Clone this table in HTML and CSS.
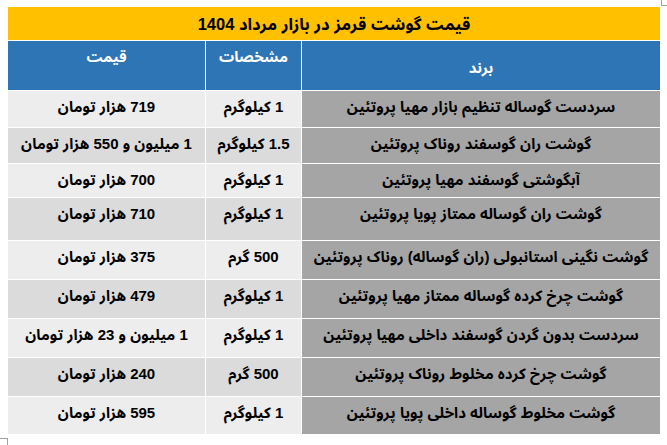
FILE: index.html
```html
<!DOCTYPE html>
<html lang="fa">
<head>
<meta charset="utf-8">
<link rel="stylesheet" href="styles.css">
</head>
<body>
<div class="page">
  <span class="mark mark-tr"></span>
  <div class="table" dir="rtl">
    <div class="title">قیمت گوشت قرمز در بازار مرداد 1404</div>

    <div class="hd hd-brand">برند</div>
    <div class="hd">مشخصات</div>
    <div class="hd">قیمت</div>

    <div class="c brand">سردست گوساله تنظیم بازار مهیا پروتئین</div>
    <div class="c odd">1 کیلوگرم</div>
    <div class="c odd">719 هزار تومان</div>

    <div class="c brand">گوشت ران گوسفند روناک پروتئین</div>
    <div class="c even">1.5 کیلوگرم</div>
    <div class="c even">1 میلیون و 550 هزار تومان</div>

    <div class="c brand">آبگوشتی گوسفند مهیا پروتئین</div>
    <div class="c odd">1 کیلوگرم</div>
    <div class="c odd">700 هزار تومان</div>

    <div class="c brand">گوشت ران گوساله ممتاز پویا پروتئین</div>
    <div class="c even">1 کیلوگرم</div>
    <div class="c even">710 هزار تومان</div>

    <div class="c brand">گوشت نگینی استانبولی (ران گوساله) روناک پروتئین</div>
    <div class="c odd">500 گرم</div>
    <div class="c odd">375 هزار تومان</div>

    <div class="c brand">گوشت چرخ کرده گوساله ممتاز مهیا پروتئین</div>
    <div class="c even">1 کیلوگرم</div>
    <div class="c even">479 هزار تومان</div>

    <div class="c brand">سردست بدون گردن گوسفند داخلی مهیا پروتئین</div>
    <div class="c odd">1 کیلوگرم</div>
    <div class="c odd">1 میلیون و 23 هزار تومان</div>

    <div class="c brand">گوشت چرخ کرده مخلوط روناک پروتئین</div>
    <div class="c even">500 گرم</div>
    <div class="c even">240 هزار تومان</div>

    <div class="c brand">گوشت مخلوط گوساله داخلی پویا پروتئین</div>
    <div class="c odd">1 کیلوگرم</div>
    <div class="c odd">595 هزار تومان</div>
  </div>
  <span class="mark mark-bl"></span>
</div>
</body>
</html>
```
FILE: styles.css
```css
html, body {
  margin: 0;
  padding: 0;
  background: #ffffff;
}
body {
  width: 667px;
  height: 445px;
  overflow: hidden;
  font-family: "Liberation Sans", "Noto Sans Arabic", "Noto Naskh Arabic", "DejaVu Sans Condensed", "DejaVu Sans", sans-serif;
}
.page {
  position: relative;
  width: 667px;
  height: 445px;
  padding: 7px 0 0 8px;
  box-sizing: border-box;
}
.table {
  width: 652px;
  display: grid;
  grid-template-columns: 358px 95px 197px;
  grid-template-rows: 33px 49px 36px 35px 33px 42px 38px 38px 38px 38px 37px;
  gap: 1px;
  background: #ffffff;
}
.title {
  grid-column: 1 / -1;
  background: #ffc000;
  color: #000;
  font-weight: bold;
  font-size: 16.5px;
  line-height: 22px;
  display: flex;
  align-items: center;
  justify-content: center;
}
.hd {
  background: #2e75b6;
  color: #fff;
  font-weight: bold;
  font-size: 15px;
  line-height: 22px;
  text-align: center;
  padding-top: 5px;
  box-sizing: border-box;
}
.hd-brand {
  padding-top: 16px;
}
.c {
  font-weight: bold;
  font-size: 15px;
  line-height: 22px;
  color: #000;
  text-align: center;
  padding-top: 5px;
  box-sizing: border-box;
  white-space: nowrap;
}
.brand { background: #a5a5a5; }
.odd { background: #ededed; }
.even { background: #dbdbdb; }
.mark {
  position: absolute;
  border-color: #a0a0a0;
  border-style: solid;
  width: 6px;
  height: 5px;
}
.mark-tr {
  left: 661px;
  top: 0;
  border-width: 0 0 1px 1px;
}
.mark-bl {
  left: 0;
  top: 438px;
  width: 7px;
  height: 7px;
  border-width: 1px 1px 0 0;
}
```
